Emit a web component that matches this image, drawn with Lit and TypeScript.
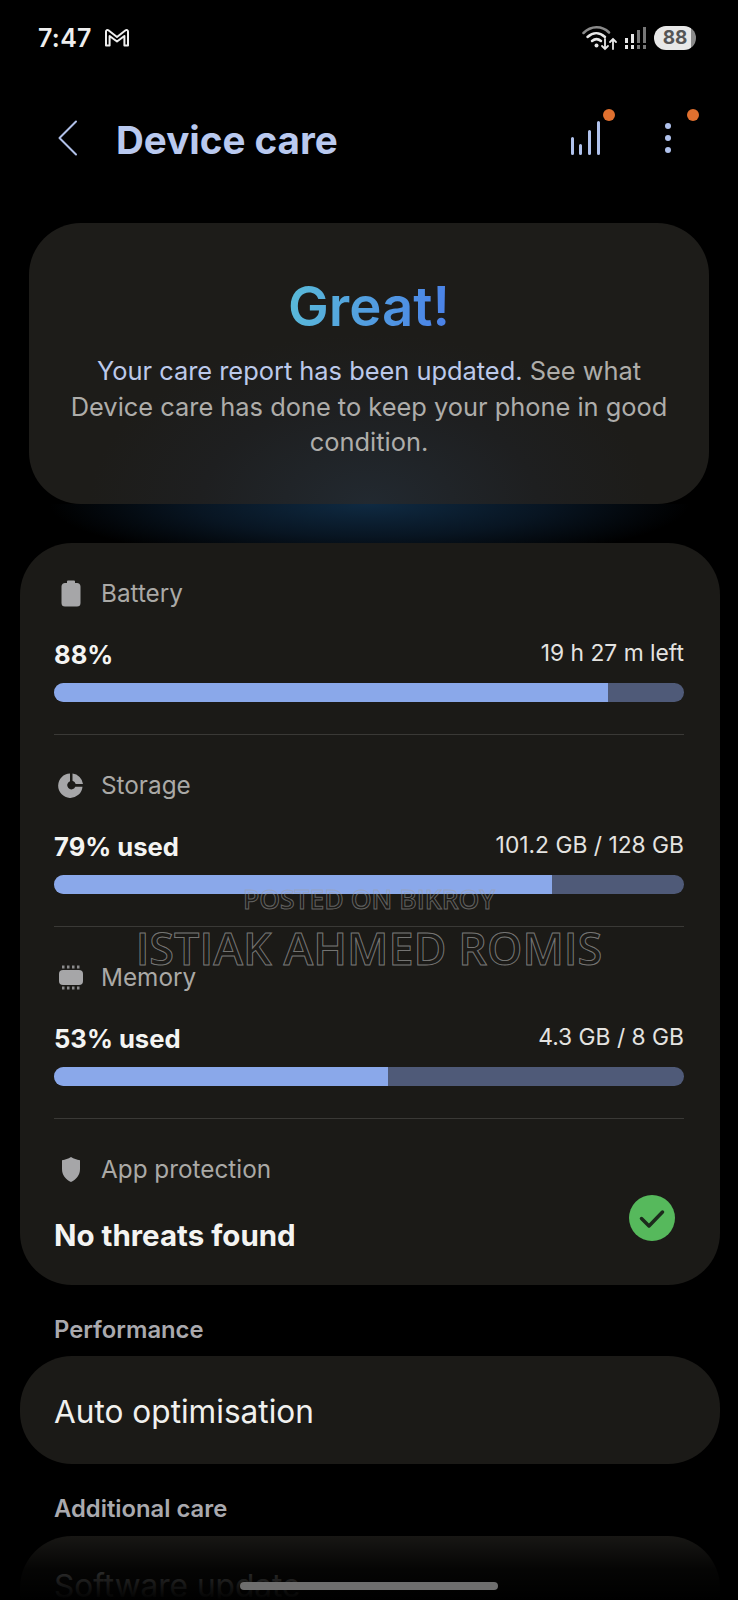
import { LitElement, html, css, svg } from 'lit';
import { customElement } from 'lit/decorators.js';

// icons for the panel rows
const icons = {
  battery: svg`<path d="M10 0.500h6a1 1 0 0 1 1 1V3h1.500A3.500 3.500 0 0 1 22.500 6.500V23a3.500 3.500 0 0 1-3.500 3.500H7A3.500 3.500 0 0 1 3.500 23V6.500A3.500 3.500 0 0 1 7.500 3H9V1.500a1 1 0 0 1 1-1z" fill="#a6a6a8"/>`,
  storage: svg`<path fill-rule="evenodd" d="M12 1.500v7.700a4.200 4.200 0 1 0 5.300 5.500h7.200A12.200 12.200 0 1 1 12 1.500zM14.500 1.500A12 12 0 0 1 25 12h-7.300a4.500 4.500 0 0 0-3.200-3.200z" fill="#a6a6a8"/>`,
  memory: svg`<rect x="1" y="6" width="24" height="15" rx="4" fill="#a6a6a8"/>
    <g fill="#8a8a8c">
      <rect x="4" y="1.500" width="2.500" height="3"/><rect x="9" y="1.500" width="2.500" height="3"/><rect x="14" y="1.500" width="2.500" height="3"/><rect x="19" y="1.500" width="2.500" height="3"/>
      <rect x="4" y="22.500" width="2.500" height="3"/><rect x="9" y="22.500" width="2.500" height="3"/><rect x="14" y="22.500" width="2.500" height="3"/><rect x="19" y="22.500" width="2.500" height="3"/>
    </g>`,
  shield: svg`<path d="M13 1c3 1.800 5.500 2.800 9 3.200V13c0 6-3.500 10.500-9 13C7.500 23.500 4 19 4 13V4.200C7.500 3.800 10 2.800 13 1z" fill="#a6a6a8"/>`,
};

const usage = [
  { icon: icons.battery, label: 'Battery', value: '88%', detail: '19 h 27 m left', pct: 88 },
  { icon: icons.storage, label: 'Storage', value: '79% used', detail: '101.2 GB / 128 GB', pct: 79 },
  { icon: icons.memory, label: 'Memory', value: '53% used', detail: '4.3 GB / 8 GB', pct: 53 },
];

@customElement('app-root')
export class AppRoot extends LitElement {
  static styles = css`
    :host {
      display: block;
      position: relative;
      width: 738px;
      height: 1600px;
      overflow: hidden;
      background: #000;
      font-family: Inter, 'Noto Sans', sans-serif;
      color: #fff;
    }
    .status {
      display: flex;
      align-items: center;
      height: 38px;
      padding: 19px 42px 0 38px;
    }
    .time {
      font-size: 25px;
      font-weight: 600;
      color: #eee;
      letter-spacing: 0.3px;
    }
    .gmail {
      margin-left: 12px;
    }
    .status-right {
      margin-left: auto;
      display: flex;
      align-items: center;
      gap: 6px;
    }
    .level {
      width: 42px;
      height: 24px;
      border-radius: 12px;
      background: linear-gradient(90deg, #e8e8e8 88%, #8a8a8a 88%);
      color: #555;
      font-size: 19px;
      font-weight: 700;
      line-height: 24px;
      text-align: center;
    }
    .bar-head {
      display: flex;
      align-items: center;
      height: 90px;
      margin-top: 36px;
      padding: 0 66px 0 58px;
    }
    h1 {
      margin: 3px 0 0 38px;
      font-size: 38.600px;
      font-weight: 700;
      color: #b9c9ef;
    }
    .actions {
      margin-left: auto;
      display: flex;
      align-items: center;
      gap: 64px;
    }
    .action {
      position: relative;
      display: flex;
    }
    .dot {
      position: absolute;
      top: -12px;
      right: -15px;
      width: 12px;
      height: 12px;
      border-radius: 50%;
      background: #e0702f;
    }
    .dot.far {
      top: -13px;
      right: -27px;
    }
    .hero {
      margin: 40px 29px 0;
      height: 281px;
      box-sizing: border-box;
      padding: 50px 30px 0;
      border-radius: 52px;
      background: radial-gradient(ellipse 280px 170px at 50% 100%, #222930 0%, #1e1f20 60%, #1d1c19 100%);
      text-align: center;
    }
    .great {
      font-size: 54.500px;
      font-weight: 600;
      line-height: 66px;
      background: linear-gradient(100deg, #5abcd8 0%, #4a7fe8 100%);
      -webkit-background-clip: text;
      background-clip: text;
      color: transparent;
      width: fit-content;
      margin: 0 auto;
    }
    .hero p {
      margin: 14px -4px 0;
      font-size: 25.400px;
      line-height: 35.500px;
      color: #aeadaa;
    }
    .hero .lead {
      color: #bcc9ea;
    }
    .glow {
      height: 39px;
      background: radial-gradient(ellipse 320px 60px at 50% 0%, #0f2a42 0%, #081522 55%, #000 100%);
    }
    .panel {
      margin: 0 18px 0 20px;
      height: 742px;
      box-sizing: border-box;
      padding: 0 36px 0 34px;
      border-radius: 52px;
      background: #1b1a17;
    }
    .row {
      height: 192px;
      box-sizing: border-box;
      padding-top: 34px;
      border-bottom: 1.500px solid #3a3936;
    }
    .row:last-child {
      border-bottom: none;
    }
    .label {
      display: flex;
      align-items: center;
      gap: 17px;
      height: 32px;
      padding-left: 4px;
      font-size: 24.300px;
      color: #aaa9a6;
    }
    .label svg {
      flex: none;
    }
    .values {
      display: flex;
      justify-content: space-between;
      align-items: flex-end;
      height: 59px;
      margin-top: 5px;
    }
    .value {
      font-size: 25.600px;
      font-weight: 700;
      color: #f4f4f2;
      line-height: 32px;
      padding-bottom: 2px;
    }
    .detail {
      font-size: 22.800px;
      color: #e4e3e0;
      line-height: 32px;
      padding-bottom: 4px;
    }
    .track {
      height: 19px;
      margin-top: 10px;
      border-radius: 10px;
      overflow: hidden;
      background: #4f5a78;
    }
    .fill {
      height: 100%;
      background: #8aa8ea;
    }
    .safe {
      display: flex;
      justify-content: space-between;
      align-items: flex-start;
      margin-top: 16px;
    }
    .safe .value {
      font-size: 29.500px;
      line-height: 40px;
      margin-top: 14px;
      padding-bottom: 0;
    }
    .check {
      margin-right: 9px;
      margin-top: -6px;
      display: flex;
    }
    .section {
      margin: 31px 0 0 54px;
      height: 27px;
      font-size: 23.800px;
      font-weight: 600;
      line-height: 27px;
      color: #a9a9ae;
    }
    .card {
      margin: 13px 18px 0 20px;
      height: 108px;
      padding: 0 34px;
      border-radius: 52px;
      background: #1b1a17;
      font-size: 31.600px;
      line-height: 112px;
      color: #f0f0ee;
    }
    .card.last {
      margin-top: 14px;
      line-height: 100px;
      color: #e8e8e6;
    }
    .fade {
      position: absolute;
      left: 0;
      right: 0;
      bottom: 0;
      height: 70px;
      background: linear-gradient(180deg, rgba(0, 0, 0, 0) 0%, rgba(0, 0, 0, 0.8) 55%, #000 100%);
    }
    .home {
      position: absolute;
      left: 240px;
      top: 1582px;
      width: 258px;
      height: 8px;
      border-radius: 4px;
      background: #6e6e6e;
    }
    .mark {
      position: absolute;
      left: 0;
      width: 738px;
      text-align: center;
      font-family: 'Open Sans', sans-serif;
      font-weight: 600;
      color: transparent;
      -webkit-text-stroke: 1px rgba(160, 160, 160, 0.55);
      white-space: nowrap;
    }
    .mark.small {
      top: 882px;
      font-size: 26.500px;
      line-height: 34px;
    }
    .mark.big {
      top: 920px;
      font-size: 45px;
      line-height: 56px;
      -webkit-text-stroke-color: rgba(170, 170, 170, 0.65);
    }
  `;

  render() {
    return html`
      <div class="status">
        <span class="time">7:47</span>
        <svg class="gmail" width="26" height="20" viewBox="0 0 26 20" fill="none" stroke="#eee" stroke-width="2" stroke-linejoin="round">
          <path d="M2 17.500V3.500a1.500 1.500 0 0 1 2.400-1.200L13 9l8.600-6.700A1.500 1.500 0 0 1 24 3.500v14h-3.600V8L13 13.500 5.600 8v9.500z"/>
        </svg>
        <div class="status-right">
          <svg width="36" height="28" viewBox="0 0 36 28" fill="none" stroke="#e8e8e8" stroke-linecap="round">
            <path d="M1.500 9C9 1.500 20 1.500 27 8.500" stroke="#8a8a8a" stroke-width="2.500"/>
            <path d="M5.500 13C11 8 17.500 8 23 13" stroke-width="2.500"/>
            <path d="M10 17c3-2.500 6-2.500 9 0" stroke-width="2.500"/>
            <circle cx="14.500" cy="21.500" r="2" fill="#e8e8e8" stroke="none"/>
            <path d="M23 15v10M20 22l3 3 3-3M31 25V15M28 18l3-3 3 3" stroke-width="1.800"/>
          </svg>
          <svg width="24" height="24" viewBox="0 0 24 24">
            <g fill="#e8e8e8">
              <rect x="1" y="12" width="3" height="5"/><rect x="1" y="19" width="3" height="4"/>
              <rect x="7" y="8" width="3" height="9"/><rect x="7" y="19" width="3" height="4"/>
            </g>
            <g fill="#777">
              <rect x="13" y="4" width="3" height="13"/><rect x="13" y="19" width="3" height="4"/>
              <rect x="19" y="1" width="3" height="16"/><rect x="19" y="19" width="3" height="4"/>
            </g>
          </svg>
          <div class="level">88</div>
        </div>
      </div>

      <div class="bar-head">
        <svg width="20" height="36" viewBox="0 0 20 36" fill="none" stroke="#b0c0e8" stroke-width="2" stroke-linecap="round" stroke-linejoin="round">
          <path d="M18 1.500 1.500 18 18 34.500"/>
        </svg>
        <h1>Device care</h1>
        <div class="actions">
          <div class="action">
            <svg width="29" height="34" viewBox="0 0 29 34" fill="none" stroke="#b0c2ec" stroke-width="3" stroke-linecap="round">
              <path d="M1.500 32.500V17.500M9.500 32.500V24.500M18.500 32.500V10.500M27.500 32.500V1.500"/>
            </svg>
            <span class="dot"></span>
          </div>
          <div class="action">
            <svg width="8" height="32" viewBox="0 0 8 32" fill="#b0c2ec">
              <circle cx="4" cy="4" r="3"/><circle cx="4" cy="16" r="3"/><circle cx="4" cy="28" r="3"/>
            </svg>
            <span class="dot far"></span>
          </div>
        </div>
      </div>

      <div class="hero">
        <div class="great">Great!</div>
        <p><span class="lead">Your care report has been updated.</span> See what Device care has done to keep your phone in good condition.</p>
      </div>
      <div class="glow"></div>

      <div class="panel">
        ${usage.map(
          (u) => html`
            <div class="row">
              <div class="label">
                <svg width="26" height="27" viewBox="0 0 26 27">${u.icon}</svg>
                ${u.label}
              </div>
              <div class="values">
                <span class="value">${u.value}</span>
                <span class="detail">${u.detail}</span>
              </div>
              <div class="track"><div class="fill" style="width:${u.pct}%"></div></div>
            </div>
          `
        )}
        <div class="row">
          <div class="label">
            <svg width="26" height="27" viewBox="0 0 26 27">${icons.shield}</svg>
            App protection
          </div>
          <div class="safe">
            <span class="value">No threats found</span>
            <svg class="check" width="46" height="46" viewBox="0 0 46 46">
              <circle cx="23" cy="23" r="23" fill="#56b95c"/>
              <path d="M12.500 23.500 20 31 33.500 17" fill="none" stroke="#1c2a1c" stroke-width="3.500" stroke-linecap="round" stroke-linejoin="round"/>
            </svg>
          </div>
        </div>
      </div>

      <div class="section">Performance</div>
      <div class="card">Auto optimisation</div>
      <div class="section">Additional care</div>
      <div class="card last">Software update</div>

      <div class="fade"></div>
      <div class="home"></div>
      <div class="mark small">POSTED ON BIKROY</div>
      <div class="mark big">ISTIAK AHMED ROMIS</div>
    `;
  }
}
